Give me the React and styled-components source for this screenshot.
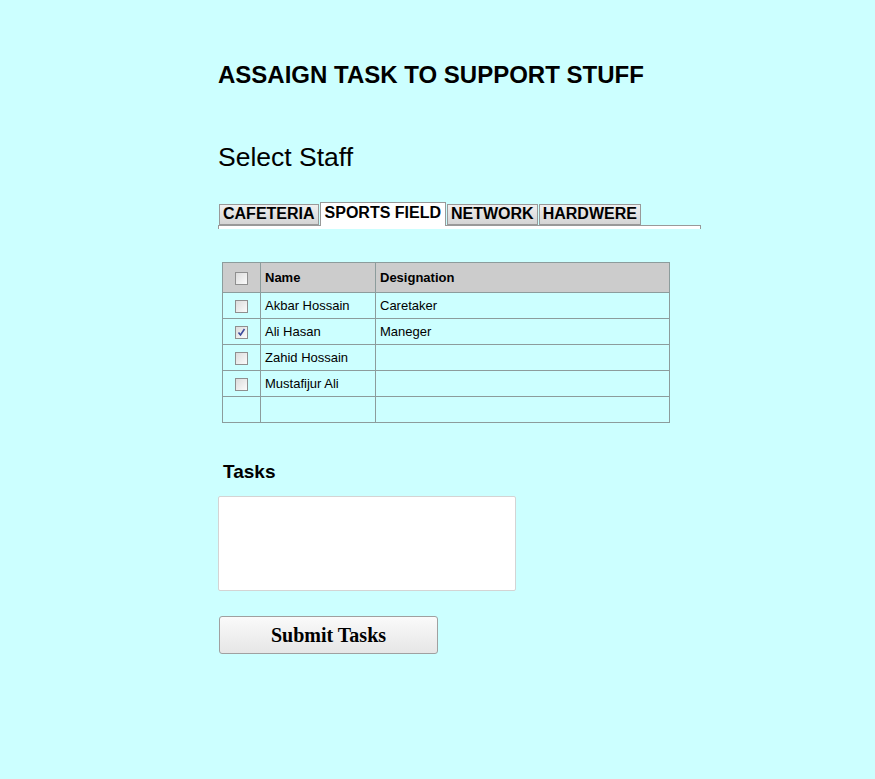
import React, { useState } from 'react';
import styled, { createGlobalStyle } from 'styled-components';

const GlobalStyle = createGlobalStyle`
  html, body {
    margin: 0;
    padding: 0;
    background: #ccffff;
    font-family: "Liberation Sans", Arial, sans-serif;
    color: #000;
  }
`;

const Page = styled.div`
  min-height: 779px;
  padding: 61px 0 0 218px;
  box-sizing: border-box;
`;

const Heading = styled.h2`
  margin: 0;
  font-size: 24px;
  line-height: 28px;
  font-weight: bold;
`;

const SubHeading = styled.h3`
  margin: 53px 0 0;
  font-size: 26.5px;
  line-height: 30px;
  font-weight: normal;
`;

const TabBar = styled.div`
  margin-top: 30px;
  width: 483px;
  display: flex;
  flex-direction: column;
`;

const TabList = styled.div`
  display: flex;
  align-items: flex-end;
  padding-left: 1px;
  height: 23px;
`;

const Tab = styled.button`
  font-family: "Liberation Sans", Arial, sans-serif;
  font-size: 16px;
  font-weight: bold;
  line-height: 18px;
  color: #000;
  margin: 0 1px 0 0;
  padding: ${({ $active }) => ($active ? '1px 4px 4px 4px' : '0 3px 1px 3px')};
  border: 1px solid #999;
  border-bottom: ${({ $active }) => ($active ? 'none' : '1px solid #999')};
  background: ${({ $active }) =>
    $active ? '#fff' : 'linear-gradient(#f0f0f0, #d4d4d4)'};
  position: relative;
  z-index: ${({ $active }) => ($active ? 2 : 1)};
  margin-bottom: ${({ $active }) => ($active ? '-1px' : '0')};
  cursor: pointer;
`;

const TabPanel = styled.div`
  height: 4px;
  border: 1px solid #999;
  border-bottom: none;
  background: #fff;
  box-sizing: border-box;
`;

const Table = styled.table`
  margin: 33px 0 0 4px;
  width: 448px;
  border-collapse: collapse;
  font-size: 13px;
`;

const HeadCell = styled.th`
  background: #cccccc;
  border: 1px solid #8c9c9c;
  height: 29px;
  padding: 0 0 0 4px;
  text-align: left;
  font-weight: bold;
  width: ${({ $w }) => $w || 'auto'};
`;

const Cell = styled.td`
  border: 1px solid #8c9c9c;
  height: 25px;
  padding: 0 0 0 4px;
`;

const BoxCell = styled(Cell)`
  padding: 0;
  text-align: center;
`;

const BoxHeadCell = styled(HeadCell)`
  padding: 0;
  text-align: center;
`;

const Box = styled.span`
  display: inline-block;
  width: 13px;
  height: 13px;
  box-sizing: border-box;
  border: 1px solid #8f8f8f;
  background: linear-gradient(135deg, #dcdcdc, #fbfbfb);
  vertical-align: middle;
  position: relative;
  cursor: pointer;

  svg {
    position: absolute;
    left: 1px;
    top: 1px;
  }
`;

const Label = styled.div`
  margin: 38px 0 0 5px;
  font-size: 19px;
  font-weight: bold;
  line-height: 22px;
`;

const TaskInput = styled.textarea`
  display: block;
  margin-top: 13px;
  width: 298px;
  height: 95px;
  box-sizing: border-box;
  border: 1px solid #d4d4d4;
  border-radius: 2px;
  background: #fff;
  resize: none;
  outline: none;
`;

const SubmitButton = styled.button`
  display: block;
  margin: 25px 0 0 1px;
  width: 219px;
  height: 38px;
  border: 1px solid #a0a0a0;
  border-radius: 3px;
  background: linear-gradient(#fafafa, #e6e6e6);
  font-family: "Liberation Serif", "Times New Roman", serif;
  font-size: 20px;
  font-weight: bold;
  color: #000;
  cursor: pointer;
`;

const Check = ({ checked, onClick }) => (
  <Box onClick={onClick}>
    {checked && (
      <svg width="9" height="9" viewBox="0 0 9 9">
        <path d="M1.5 4.5 L3.5 7 L7.5 1" fill="none" stroke="#3c4b9c" strokeWidth="1.6" />
      </svg>
    )}
  </Box>
);

const tabs = ['CAFETERIA', 'SPORTS FIELD', 'NETWORK', 'HARDWERE'];

const staff = [
  { name: 'Akbar Hossain', designation: 'Caretaker' },
  { name: 'Ali Hasan', designation: 'Maneger' },
  { name: 'Zahid Hossain', designation: '' },
  { name: 'Mustafijur Ali', designation: '' },
];

export default function App() {
  const [active, setActive] = useState(1);
  const [selected, setSelected] = useState({ 1: true });
  const [all, setAll] = useState(false);

  const toggle = (i) => setSelected((s) => ({ ...s, [i]: !s[i] }));

  return (
    <Page>
      <GlobalStyle />
      <Heading>ASSAIGN TASK TO SUPPORT STUFF</Heading>
      <SubHeading>Select Staff</SubHeading>

      <TabBar>
        <TabList>
          {tabs.map((t, i) => (
            <Tab key={t} $active={i === active} onClick={() => setActive(i)}>
              {t}
            </Tab>
          ))}
        </TabList>
        <TabPanel />
      </TabBar>

      <Table>
        <thead>
          <tr>
            <BoxHeadCell $w="37px">
              <Check checked={all} onClick={() => setAll(!all)} />
            </BoxHeadCell>
            <HeadCell $w="110px">Name</HeadCell>
            <HeadCell>Designation</HeadCell>
          </tr>
        </thead>
        <tbody>
          {staff.map((s, i) => (
            <tr key={s.name}>
              <BoxCell>
                <Check checked={!!selected[i]} onClick={() => toggle(i)} />
              </BoxCell>
              <Cell>{s.name}</Cell>
              <Cell>{s.designation}</Cell>
            </tr>
          ))}
          <tr>
            <Cell />
            <Cell />
            <Cell />
          </tr>
        </tbody>
      </Table>

      <Label>Tasks</Label>
      <TaskInput />
      <SubmitButton>Submit Tasks</SubmitButton>
    </Page>
  );
}
